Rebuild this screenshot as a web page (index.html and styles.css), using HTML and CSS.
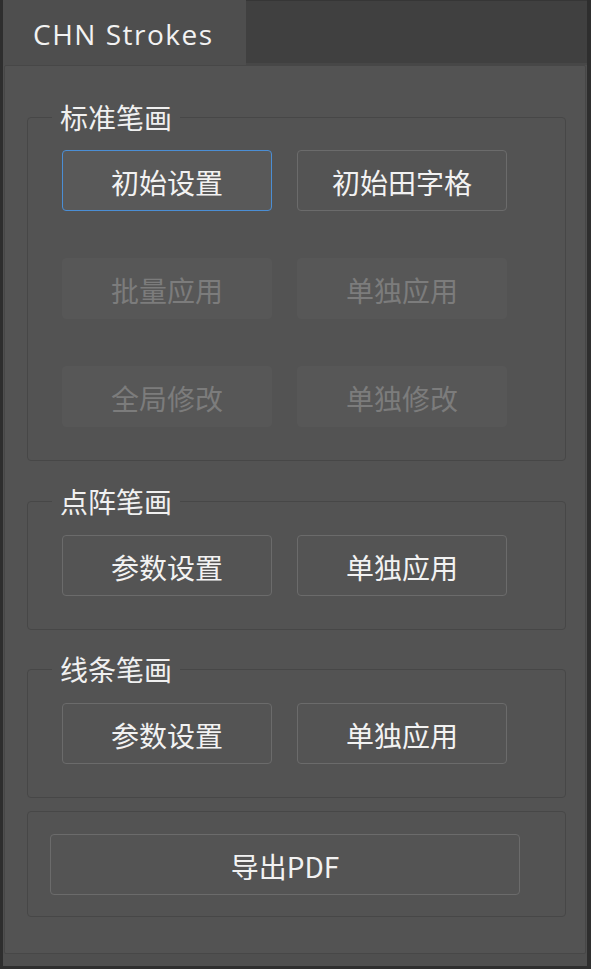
FILE: index.html
```html
<!DOCTYPE html>
<html lang="zh-CN">
<head>
<meta charset="utf-8">
<title>CHN Strokes</title>
<link rel="stylesheet" href="styles.css">
</head>
<body>
<div class="frame">
  <div class="tabbar">
    <div class="tab">CHN Strokes</div>
  </div>
  <div class="panel">
    <fieldset class="group g1">
      <legend>标准笔画</legend>
      <div class="grid">
        <button class="btn focus">初始设置</button>
        <button class="btn">初始田字格</button>
        <button class="btn" disabled>批量应用</button>
        <button class="btn" disabled>单独应用</button>
        <button class="btn" disabled>全局修改</button>
        <button class="btn" disabled>单独修改</button>
      </div>
    </fieldset>
    <fieldset class="group g2">
      <legend>点阵笔画</legend>
      <div class="grid">
        <button class="btn">参数设置</button>
        <button class="btn">单独应用</button>
      </div>
    </fieldset>
    <fieldset class="group g3">
      <legend>线条笔画</legend>
      <div class="grid">
        <button class="btn">参数设置</button>
        <button class="btn">单独应用</button>
      </div>
    </fieldset>
    <fieldset class="group g4">
      <button class="btn wide">导出PDF</button>
    </fieldset>
  </div>
</div>
</body>
</html>
```

FILE: styles.css
```css
html, body {
  margin: 0;
  padding: 0;
  background: #2e2e2e;
}
body {
  width: 591px;
  height: 969px;
  overflow: hidden;
  font-family: "Noto Sans CJK SC", "Noto Sans", sans-serif;
}
.frame {
  margin: 0 4px 0 3px;
  height: 966px;
  background: #4f4f4f;
}
.tabbar {
  height: 65px;
  display: flex;
  background: #404040;
  box-shadow: inset 0 1px 0 #363636, inset 0 -2px 0 #474747;
}
.tab {
  width: 243px;
  background: #4e4e4e;
  color: #f2f2f2;
  font-family: "Open Sans", "Noto Sans", sans-serif;
  font-size: 28px;
  letter-spacing: 1.5px;
  line-height: 65px;
  padding: 2px 0 0 30px;
  box-sizing: border-box;
  height: 65px;
}
.panel {
  margin: 0 1px;
  border: 1px solid #474747;
  border-radius: 2px;
  background: #535353;
  padding: 35px 19px 36px 22px;
}
.group {
  margin: 0;
  border: 1px solid #474747;
  border-radius: 4px;
  padding: 17px 0 33px 34px;
  min-width: 0;
}
.group legend {
  font-size: 28px;
  line-height: 32px;
  color: #f0f0f0;
  padding: 0 8px;
  margin-left: -10px;
}
.g2 { margin-top: 24px; padding-top: 18px; }
.g3 { margin-top: 23px; padding-top: 18px; }
.g4 { margin-top: 13px; padding: 22px 0 21px 22px; }
.grid {
  display: grid;
  grid-template-columns: 210px 210px;
  column-gap: 25px;
  row-gap: 47px;
}
.btn {
  height: 61px;
  margin: 0;
  padding: 0;
  box-sizing: border-box;
  border: 1.5px solid #6b6b6b;
  border-radius: 4px;
  background: #545454;
  color: #f2f2f2;
  font-family: "Noto Sans CJK SC", "Noto Sans", sans-serif;
  font-size: 28px;
  line-height: 1;
  padding-top: 3px;
}
.btn.focus {
  border-color: #4b8ed4;
  background: #595959;
}
.btn:disabled {
  border-color: #575757;
  background: #575757;
  color: #7c7c7c;
}
.btn.wide {
  width: 470px;
  display: block;
}
```
